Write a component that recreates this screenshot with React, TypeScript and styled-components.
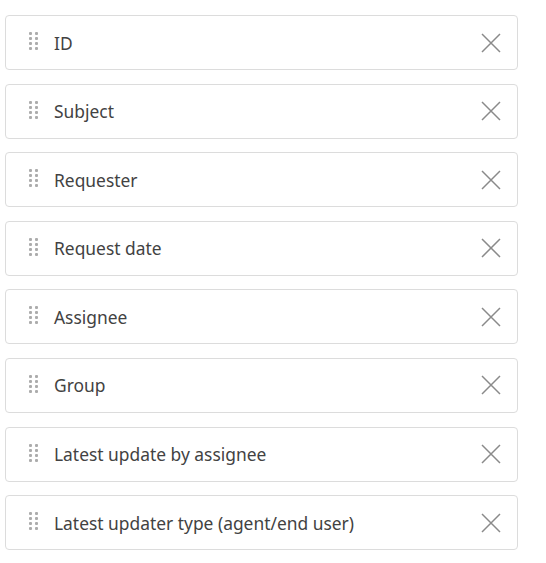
import React from "react";
import styled, { createGlobalStyle } from "styled-components";

const GlobalStyle = createGlobalStyle`
  html, body {
    margin: 0;
    padding: 0;
    background: #ffffff;
  }
  body {
    font-family: "Noto Sans", "Open Sans", sans-serif;
  }
`;

const List = styled.ul`
  list-style: none;
  margin: 0;
  padding: 15px 0 0 5px;
  width: 513px;
  display: flex;
  flex-direction: column;
  gap: 13.6px;
`;

const Row = styled.li`
  box-sizing: border-box;
  height: 55px;
  display: flex;
  align-items: center;
  border: 1px solid #dcdcdc;
  border-radius: 4px;
  background: #fff;
  padding: 0 16px 0 23px;
`;

const Handle = styled.span`
  display: grid;
  grid-template-columns: repeat(2, 3px);
  grid-auto-rows: 3px;
  column-gap: 3px;
  row-gap: 2px;
  margin: 0 16px 3px 0;
  span {
    background: #acacac;
    border-radius: 1px;
  }
`;

const Label = styled.span`
  flex: 1;
  font-size: 17.4px;
  color: #424242;
`;

const RemoveButton = styled.button`
  border: 0;
  background: none;
  padding: 0;
  width: 20px;
  height: 20px;
  display: flex;
  align-items: center;
  justify-content: center;
  cursor: pointer;
`;

function DragHandle() {
  return (
    <Handle aria-hidden>
      {Array.from({ length: 8 }).map((_, i) => (
        <span key={i} />
      ))}
    </Handle>
  );
}

function CloseIcon() {
  return (
    <svg width="20" height="20" viewBox="0 0 20 20">
      <path d="M1 1 L19 19 M19 1 L1 19" stroke="#8a8a8a" strokeWidth="1.5" fill="none" />
    </svg>
  );
}

const columns = [
  "ID",
  "Subject",
  "Requester",
  "Request date",
  "Assignee",
  "Group",
  "Latest update by assignee",
  "Latest updater type (agent/end user)",
];

export default function App() {
  return (
    <>
      <GlobalStyle />
      <List>
        {columns.map((c) => (
          <Row key={c}>
            <DragHandle />
            <Label>{c}</Label>
            <RemoveButton aria-label={`Remove ${c}`}>
              <CloseIcon />
            </RemoveButton>
          </Row>
        ))}
      </List>
    </>
  );
}
